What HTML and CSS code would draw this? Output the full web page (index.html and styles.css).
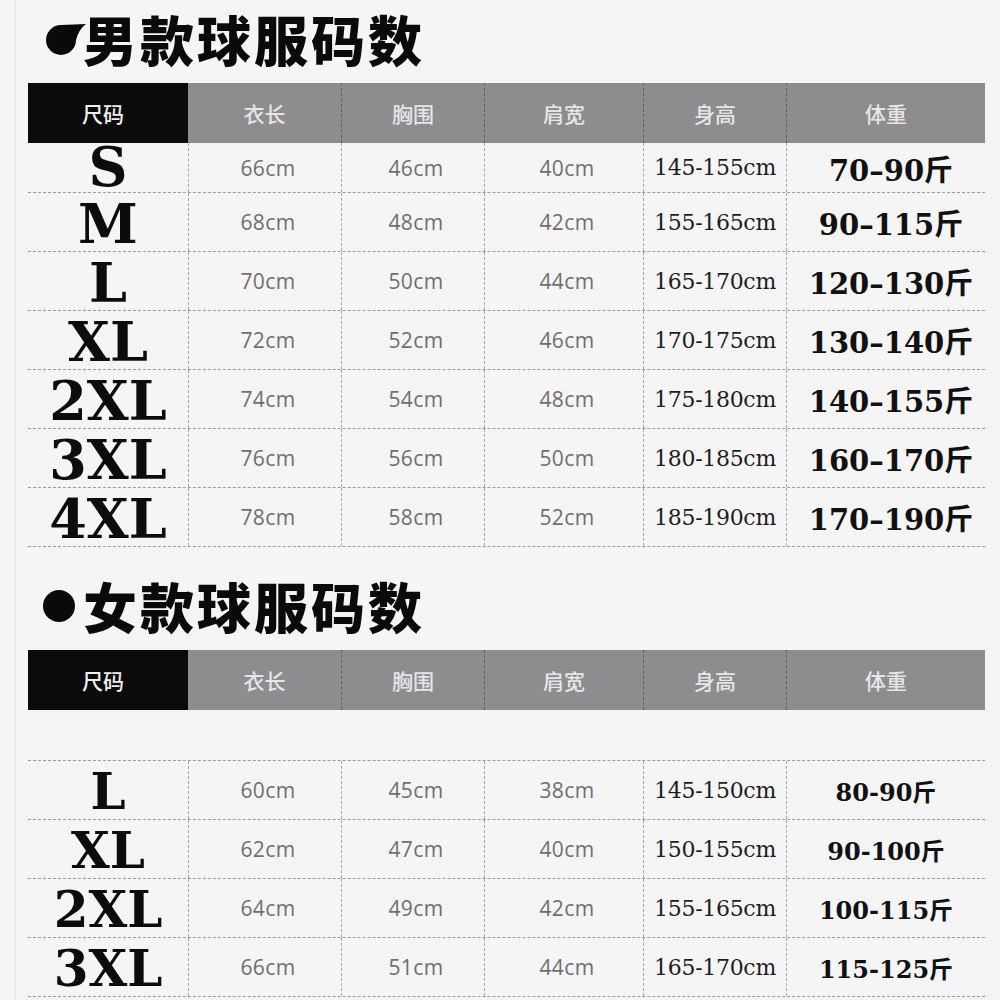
FILE: index.html
```html
<!DOCTYPE html>
<html lang="zh-CN">
<head>
<meta charset="utf-8">
<title>球服码数</title>
<link rel="stylesheet" href="styles.css">
</head>
<body>
<div class="page">
  <section class="section men">
    <h2 class="title">
      <svg class="bullet" width="44" height="36" viewBox="0 0 44 36"><path d="M18 4 L43 3 Q36 8 33 19 A15 15 0 1 1 18 4 Z" fill="#0a0a0a"/></svg>
      <span>男款球服码数</span>
    </h2>
    <div class="table">
      <div class="row head">
        <div class="cell h-size">尺码</div>
        <div class="cell">衣长</div>
        <div class="cell">胸围</div>
        <div class="cell">肩宽</div>
        <div class="cell">身高</div>
        <div class="cell">体重</div>
      </div>
      <div class="row first"><div class="cell c-size">S</div><div class="cell c-num">66cm</div><div class="cell c-num">46cm</div><div class="cell c-num">40cm</div><div class="cell c-h">145-155cm</div><div class="cell c-w">70–90斤</div></div>
      <div class="row"><div class="cell c-size">M</div><div class="cell c-num">68cm</div><div class="cell c-num">48cm</div><div class="cell c-num">42cm</div><div class="cell c-h">155-165cm</div><div class="cell c-w">90–115斤</div></div>
      <div class="row"><div class="cell c-size">L</div><div class="cell c-num">70cm</div><div class="cell c-num">50cm</div><div class="cell c-num">44cm</div><div class="cell c-h">165-170cm</div><div class="cell c-w">120–130斤</div></div>
      <div class="row"><div class="cell c-size">XL</div><div class="cell c-num">72cm</div><div class="cell c-num">52cm</div><div class="cell c-num">46cm</div><div class="cell c-h">170-175cm</div><div class="cell c-w">130–140斤</div></div>
      <div class="row"><div class="cell c-size">2XL</div><div class="cell c-num">74cm</div><div class="cell c-num">54cm</div><div class="cell c-num">48cm</div><div class="cell c-h">175-180cm</div><div class="cell c-w">140–155斤</div></div>
      <div class="row"><div class="cell c-size">3XL</div><div class="cell c-num">76cm</div><div class="cell c-num">56cm</div><div class="cell c-num">50cm</div><div class="cell c-h">180-185cm</div><div class="cell c-w">160–170斤</div></div>
      <div class="row"><div class="cell c-size">4XL</div><div class="cell c-num">78cm</div><div class="cell c-num">58cm</div><div class="cell c-num">52cm</div><div class="cell c-h">185-190cm</div><div class="cell c-w">170–190斤</div></div>
    </div>
  </section>

  <section class="section women">
    <h2 class="title">
      <svg class="bullet round" width="44" height="36" viewBox="0 0 44 36"><circle cx="16" cy="18" r="16" fill="#0a0a0a"/></svg>
      <span>女款球服码数</span>
    </h2>
    <div class="table">
      <div class="row head">
        <div class="cell h-size">尺码</div>
        <div class="cell">衣长</div>
        <div class="cell">胸围</div>
        <div class="cell">肩宽</div>
        <div class="cell">身高</div>
        <div class="cell">体重</div>
      </div>
      <div class="spacer"></div>
      <div class="row"><div class="cell c-size">L</div><div class="cell c-num">60cm</div><div class="cell c-num">45cm</div><div class="cell c-num">38cm</div><div class="cell c-h">145-150cm</div><div class="cell c-w">80-90斤</div></div>
      <div class="row"><div class="cell c-size">XL</div><div class="cell c-num">62cm</div><div class="cell c-num">47cm</div><div class="cell c-num">40cm</div><div class="cell c-h">150-155cm</div><div class="cell c-w">90-100斤</div></div>
      <div class="row"><div class="cell c-size">2XL</div><div class="cell c-num">64cm</div><div class="cell c-num">49cm</div><div class="cell c-num">42cm</div><div class="cell c-h">155-165cm</div><div class="cell c-w">100-115斤</div></div>
      <div class="row"><div class="cell c-size">3XL</div><div class="cell c-num">66cm</div><div class="cell c-num">51cm</div><div class="cell c-num">44cm</div><div class="cell c-h">165-170cm</div><div class="cell c-w">115-125斤</div></div>
    </div>
  </section>
</div>
</body>
</html>
```

FILE: styles.css
```css
* { box-sizing: border-box; }
html, body {
  margin: 0;
  padding: 0;
  background: #f5f5f5;
}
body {
  font-family: "Noto Sans CJK SC", "Noto Sans", sans-serif;
  width: 1000px;
  height: 1000px;
  overflow: hidden;
}
.page {
  border-left: 1px solid #e2e2e2;
  margin-left: 15px;
  padding: 0 15px 0 12px;
  min-height: 1000px;
}
.title {
  margin: 0;
  height: 83px;
  padding-bottom: 6px;
  display: flex;
  align-items: center;
  font-family: "Noto Sans CJK SC", sans-serif;
  font-weight: 900;
  font-size: 54px;
  letter-spacing: 3px;
  color: #0a0a0a;
  line-height: 1.1;
}
.bullet {
  margin-left: 15px;
  margin-right: -4px;
  flex: none;
}
.women .title {
  height: 103px;
  padding-top: 14px;
  padding-bottom: 0;
}

.table { width: 957px; }
.row {
  display: grid;
  grid-template-columns: 160px 153px 143px 159px 143px 199px;
  grid-template-rows: 100%;
  height: 59px;
  border-bottom: 1px dashed #9c9c9c;
}
.row.first { height: 50px; }
.cell {
  display: flex;
  align-items: center;
  justify-content: center;
  border-left: 1px dashed #a8a8a8;
  white-space: nowrap;
  min-height: 0;
}
.cell.c-size { border-left: none; }

.row.head {
  height: 60px;
  border-bottom: none;
  background: #8d8d8f;
  color: #e6e6e6;
  font-size: 21px;
  font-weight: 500;
}
.row.head .cell { border-left: 1px dashed #5f5f62; }
.row.head .cell:nth-child(2) { border-left: none; }
.row.head .h-size {
  background: #0b0b0b;
  color: #efefef;
  border-left: none;
  padding-right: 10px;
}
.spacer {
  height: 51px;
  border-bottom: 1px dashed #9c9c9c;
}

.c-size {
  font-family: "DejaVu Serif", serif;
  font-weight: bold;
  font-size: 54px;
  color: #0c0c0c;
  line-height: 44px;
  padding-top: 4px;
}
.row.first .c-size { padding-top: 0; padding-bottom: 2px; }
.c-num {
  font-family: "Open Sans", sans-serif;
  font-size: 21px;
  letter-spacing: 0.4px;
  color: #6f6f6f;
  padding-left: 6px;
}
.c-h {
  font-family: "DejaVu Serif", serif;
  font-size: 22px;
  color: #1e1e1e;
  letter-spacing: -0.3px;
}
.c-w {
  font-family: "DejaVu Serif", "Noto Sans CJK SC", serif;
  font-weight: bold;
  font-size: 29px;
  color: #111;
  padding-left: 10px;
}
.women .c-size { font-size: 50px; }
.women .c-w { font-size: 24px; padding-left: 0; }
```
